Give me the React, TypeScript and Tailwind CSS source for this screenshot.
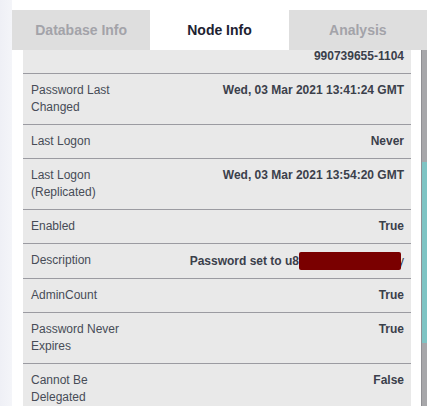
import React from 'react';

type Row = {
  label: string;
  value: React.ReactNode;
};

const rows: Row[] = [
  { label: '', value: '990739655-1104' },
  { label: 'Password Last Changed', value: 'Wed, 03 Mar 2021 13:41:24 GMT' },
  { label: 'Last Logon', value: 'Never' },
  { label: 'Last Logon (Replicated)', value: 'Wed, 03 Mar 2021 13:54:20 GMT' },
  { label: 'Enabled', value: 'True' },
  {
    label: 'Description',
    value: (
      <span className="inline-flex items-center">
        <span>Password set to u8</span>
        <span className="relative z-10 inline-block w-[102px] h-[18px] bg-[#7a0000] rounded-[2px]" />
        <span className="-ml-[3px] font-normal">y</span>
      </span>
    ),
  },
  { label: 'AdminCount', value: 'True' },
  { label: 'Password Never Expires', value: 'True' },
  { label: 'Cannot Be Delegated', value: 'False' },
];

const tabs = ['Database Info', 'Node Info', 'Analysis'];

const App: React.FC = () => {
  return (
    <div
      className="flex w-[427px] h-[406px] overflow-hidden bg-white"
      style={{ fontFamily: '"Liberation Sans", Arial, sans-serif' }}
    >
      {/* Left backdrop strip */}
      <div className="w-[12px] shrink-0 bg-gradient-to-r from-[#eff0f6] to-[#f4f5f9]" />

      <div className="flex-1 flex flex-col min-w-0">
        <div className="h-[10px] shrink-0 bg-white" />

        {/* Tabs */}
        <div className="flex h-[40px] shrink-0">
          {tabs.map((tab) => (
            <div
              key={tab}
              className={`flex-1 flex items-center justify-center text-[14px] font-bold ${
                tab === 'Node Info'
                  ? 'bg-white text-[#1d2231]'
                  : 'bg-[#dedede] text-[#a3a3a9]'
              }`}
            >
              {tab}
            </div>
          ))}
        </div>

        {/* Content */}
        <div className="flex flex-1 min-h-0">
          <div className="flex-1 min-w-0 overflow-hidden pl-[11px] pr-[10px]">
            <div className="-mt-[10px] bg-[#e9e9e9] text-[12px] leading-[17px]">
              {rows.map((row, i) => (
                <div
                  key={i}
                  className="flex items-start py-2 border-b border-[#9b9ba1]"
                >
                  <div className="w-[108px] shrink-0 pl-2 pr-1 text-[#474c57]">
                    {row.label}
                  </div>
                  <div className="flex-1 min-w-0 pr-[7px] text-right font-bold text-[#3b404b] whitespace-nowrap flex justify-end">
                    {row.value}
                  </div>
                </div>
              ))}
            </div>
          </div>

          {/* Scrollbar */}
          <div className="w-[6px] shrink-0 flex flex-col border-l border-[#8f8f93]">
            <div className="h-[112px] bg-[#a7a7aa]" />
            <div className="h-[181px] bg-[#7fc4c4]" />
            <div className="flex-1 bg-[#a7a7aa]" />
          </div>
        </div>
      </div>
    </div>
  );
};

export default App;
